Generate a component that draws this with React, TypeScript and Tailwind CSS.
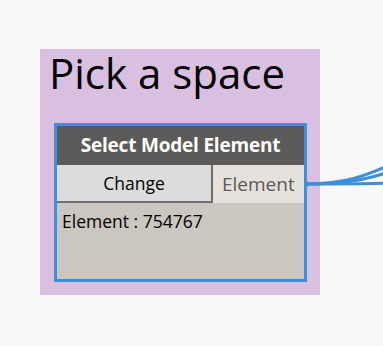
import React from "react";

export default function App() {
  return (
    <div className="relative w-[383px] h-[346px] bg-[#f8f8f8] overflow-hidden pl-[40px] pt-[49px]" style={{ fontFamily: '"Open Sans", "Noto Sans", sans-serif' }}>
      <div className="w-[280px] h-[246px] bg-[#d9bfe0] flex flex-col">
        <div className="pl-[9px] pt-[0px] h-[74px] text-[42px] leading-[48px] text-black">Pick a space</div>
        <div className="ml-[14px] w-[253px] h-[159px] border-[3px] border-[#3f8fd9] flex flex-col">
          <div className="h-[39px] bg-[#5d5b59] flex items-center justify-center text-white font-bold text-[19px] tracking-[-0.2px]">
            Select Model Element
          </div>
          <div className="h-[38px] flex">
            <div className="w-[156px] bg-[#dcdcdc] border-r-[2px] border-b-[2px] border-[#6e6e6e] flex items-center justify-center text-[17.5px] text-black">
              Change
            </div>
            <div className="flex-1 bg-[#e5e2dd] flex items-center pl-[9px] text-[19px] text-[#5a5a5a]">
              Element
            </div>
          </div>
          <div className="flex-1 bg-[#cbc6bf] pl-[5px] pt-[6px] text-[17.5px] text-black leading-[24px]">
            Element : 754767
          </div>
        </div>
      </div>
      <svg className="absolute left-0 top-0" width="383" height="346" viewBox="0 0 383 346">
        <g fill="none" stroke="#3f8fd9" strokeWidth="3">
          <path d="M307 184 C 345 184, 365 176, 392 164" />
          <path d="M307 184 C 345 184, 365 180, 392 171" />
          <path d="M307 184 C 345 184, 365 184, 392 183" />
        </g>
        <path d="M304 179 L 311 184 L 304 189 Z" fill="#3f8fd9" />
      </svg>
    </div>
  );
}
